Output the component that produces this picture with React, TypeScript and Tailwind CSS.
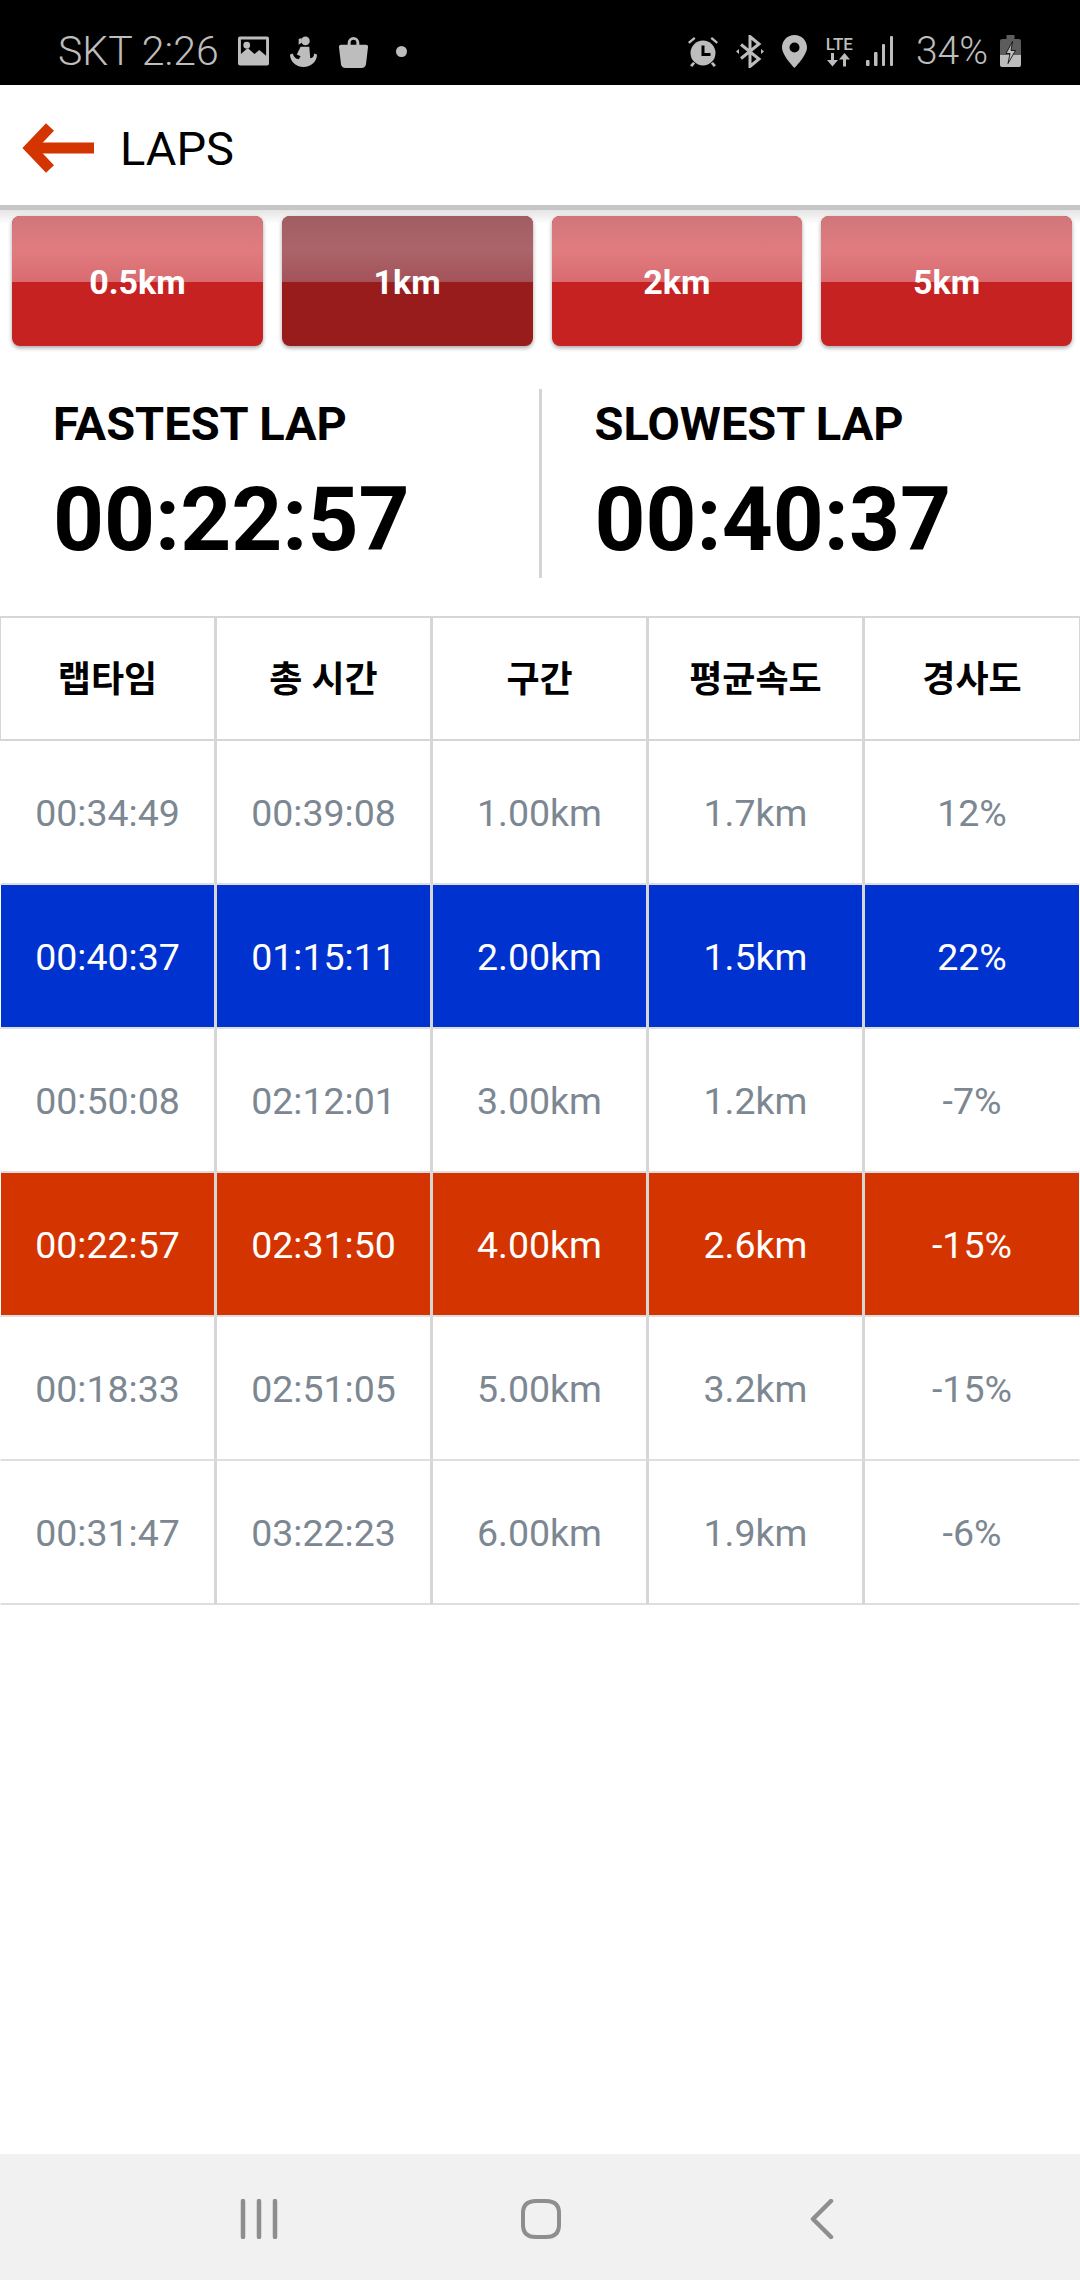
import React from 'react';

const headers = ['랩타임', '총 시간', '구간', '평균속도', '경사도'];

const rows = [
  { cells: ['00:34:49', '00:39:08', '1.00km', '1.7km', '12%'], tone: 'plain' },
  { cells: ['00:40:37', '01:15:11', '2.00km', '1.5km', '22%'], tone: 'slow' },
  { cells: ['00:50:08', '02:12:01', '3.00km', '1.2km', '-7%'], tone: 'plain' },
  { cells: ['00:22:57', '02:31:50', '4.00km', '2.6km', '-15%'], tone: 'fast' },
  { cells: ['00:18:33', '02:51:05', '5.00km', '3.2km', '-15%'], tone: 'plain' },
  { cells: ['00:31:47', '03:22:23', '6.00km', '1.9km', '-6%'], tone: 'plain' },
];

const distances = ['0.5km', '1km', '2km', '5km'];

function StatusIcons() {
  return (
    <div className="flex items-center text-[#bdbdbd]">
      {/* alarm */}
      <svg width="32" height="33" viewBox="0 0 32 33" fill="currentColor">
        <circle cx="16" cy="18" r="12.5" />
        <path d="M14.500 10.500h3v7.500h6v3h-9z" fill="#000" />
        <path d="M1 7l6-5 1.500 1.800-6 5zM31 7l-6-5-1.500 1.800 6 5zM6 27l2.200 1.600-3 3.400-2.200-1.700zM26 27l-2.200 1.600 3 3.400 2.200-1.700z" />
      </svg>
      {/* bluetooth */}
      <svg width="28" height="33" viewBox="0 0 28 33" fill="none" stroke="currentColor" strokeWidth="3" className="ml-[17px]">
        <path d="M5 9.500l18 14.500-9 7.500V1.500l9 7.500-18 14.500" />
        <path d="M0 16.500l3-2.500v5zM28 16.500l-3-2.500v5z" fill="currentColor" stroke="none" />
      </svg>
      {/* location */}
      <svg width="25" height="33" viewBox="0 0 25 33" fill="currentColor" className="ml-[18px]">
        <path fillRule="evenodd" d="M12.500 0C5.600 0 0 5.400 0 12.500 0 20.500 12.500 33 12.500 33S25 20.500 25 12.500C25 5.400 19.400 0 12.500 0zm0 7.500a5 5 0 1 1 0 10 5 5 0 0 1 0-10z" />
      </svg>
      <div className="ml-[17px] flex w-[31px] flex-col items-center">
        <span className="font-['Roboto',sans-serif] text-[17px] leading-[16px] font-medium">LTE</span>
        <svg width="24" height="15" viewBox="0 0 24 15" fill="currentColor">
          <path d="M5.500 14.500L0 8h4V1h3v7h4zM17.500 1L23 7.500h-4v7h-3v-7h-4z" />
        </svg>
      </div>
      <svg width="27" height="30" viewBox="0 0 27 30" fill="currentColor" className="ml-[11px]">
        <rect x="0" y="24" width="3.500" height="6" rx="1" />
        <rect x="8" y="16" width="3.500" height="14" rx="1" />
        <rect x="16" y="8" width="3" height="22" rx="1" />
        <rect x="24" y="0" width="3" height="30" rx="1" />
      </svg>
      <span className="ml-[23px] font-['Roboto',sans-serif] text-[39px] leading-none font-light">34%</span>
      <svg width="21" height="32" viewBox="0 0 21 32" className="ml-[12px]">
        <path d="M6.500 0h8v4H19a2 2 0 0 1 2 2v14H0V6a2 2 0 0 1 2-2h4.500z" fill="#5c5c5c" />
        <path d="M0 20h21v10a2 2 0 0 1-2 2H2a2 2 0 0 1-2-2z" fill="currentColor" />
        <path d="M12.500 6.500L6 18.500h4l-2 10 7.500-13H11l1.500-9z" fill="#bdbdbd" stroke="#000" strokeWidth="0.800" />
      </svg>
    </div>
  );
}

function StatusBar() {
  return (
    <div className="flex h-[85px] items-center justify-between bg-black pt-[17px] pr-[59px] pl-[58px] text-[#bdbdbd]">
      <div className="flex items-center">
        <span className="font-['Roboto',sans-serif] text-[41px] leading-none font-light">SKT 2:26</span>
        <svg width="31" height="30" viewBox="0 0 32 30" className="ml-[19px]" fill="currentColor">
          <path fillRule="evenodd" d="M2 0h28a2 2 0 0 1 2 2v26a2 2 0 0 1-2 2H2a2 2 0 0 1-2-2V2a2 2 0 0 1 2-2zm1 3v15l7-6 7 6 5-4 7 6V3zM9 5.500a3.500 3.500 0 1 1 0 7 3.500 3.500 0 0 1 0-7z" />
        </svg>
        <svg width="27" height="31" viewBox="0 0 28 32" className="ml-[21px]" fill="currentColor">
          <circle cx="16" cy="5" r="4.500" />
          <path d="M9 3l3-1v5l-3 2zM11 11h9l1 12c3-.500 4-2.500 4-5l3 1c0 7-6 13-14 13S0 26 0 19l3-1c.500 3 2 5 6 6l2-3-4-2z" />
        </svg>
        <svg width="31" height="33" viewBox="0 0 30 34" className="ml-[21px]" fill="currentColor">
          <path fillRule="evenodd" d="M9 10V8a6 6 0 0 1 12 0v2h7c1 0 2 1 2 2l-2 17c0 3-2 5-5 5H7c-3 0-5-2-5-5L0 12c0-1 1-2 2-2zm3 0h6V8a3 3 0 0 0-6 0z" />
        </svg>
        <span className="ml-[27px] h-[11px] w-[11px] rounded-full bg-[#bdbdbd]" />
      </div>
      <StatusIcons />
    </div>
  );
}

function AppBar() {
  return (
    <div className="flex h-[125px] items-center border-b-[5px] border-[#c6c6c6] bg-white pt-[6px] pl-[22px]">
      <svg width="72" height="52" viewBox="0 0 72 52" fill="none" stroke="#d43500" strokeWidth="11">
        <path d="M72 26H8" />
        <path d="M28 5L8 26l20 21" />
      </svg>
      <span className="ml-[26px] font-['Roboto',sans-serif] text-[47px] leading-none text-black">LAPS</span>
    </div>
  );
}

function DistanceButton({ label, active }: { label: string; active: boolean }) {
  return (
    <button
      className={`relative h-[130px] flex-1 overflow-hidden rounded-[8px] pt-[2px] font-['Roboto',sans-serif] text-[34px] font-bold text-white shadow-[0_2px_4px_rgba(0,0,0,0.35)] ${
        active ? 'bg-[#981c1c]' : 'bg-[#c62222]'
      }`}
    >
      <span
        className={`absolute inset-x-0 top-0 h-[66px] bg-gradient-to-b ${
          active ? 'from-[#a15d62] via-[#ab656a] to-[#a45259]' : 'from-[#d0767b] via-[#e07c80] to-[#d96b70]'
        }`}
      />
      <span className="relative">{label}</span>
    </button>
  );
}

function LapStat({ title, time }: { title: string; time: string }) {
  return (
    <div className="flex-1 pl-[53px]">
      <div className="mt-[8px] font-['Roboto',sans-serif] text-[47px] leading-[54px] font-bold text-black">{title}</div>
      <div className="mt-[17px] font-['Roboto',sans-serif] text-[89px] leading-[104px] font-bold text-black">{time}</div>
    </div>
  );
}

function LapTable() {
  return (
    <div className="mt-[38px] grid grid-cols-5 border-t-2 border-[#d6d6d6]">
      {headers.map((h, i) => (
        <div
          key={h}
          className={`flex h-[123px] items-center justify-center border-b-2 border-l border-[#d6d6d6] pt-[3px] font-['Roboto','Noto_Sans_CJK_KR',sans-serif] text-[36px] font-bold text-black ${
            i === 4 ? 'border-r' : 'border-r-2'
          }`}
        >
          {h}
        </div>
      ))}
      {rows.map((row) =>
        row.cells.map((cell, i) => (
          <div
            key={row.cells[0] + i}
            className={`flex h-[144px] items-center justify-center border-b-2 border-l border-b-[#dedede] border-l-[#d6d6d6] pt-[3px] font-['Roboto',sans-serif] text-[37.5px] ${
              i === 0 ? 'border-l-white' : ''
            } ${i === 4 ? 'border-r border-r-white' : 'border-r-2 border-r-[#d6d6d6]'} ${
              row.tone === 'slow'
                ? 'bg-[#0032d0] text-white'
                : row.tone === 'fast'
                  ? 'bg-[#d43500] text-white'
                  : 'bg-white text-[#7d8792]'
            }`}
          >
            {cell}
          </div>
        )),
      )}
    </div>
  );
}

function NavBar() {
  return (
    <div className="flex h-[126px] items-center bg-[#f1f1f1] pt-[4px] pl-[240px] text-[#8e8e8e]">
      <svg width="38" height="40" viewBox="0 0 38 40" fill="none" stroke="currentColor" strokeWidth="4.500" strokeLinecap="round">
        <path d="M3 2v36M19 2v36M35 2v36" />
      </svg>
      <svg width="40" height="40" viewBox="0 0 40 40" fill="none" stroke="currentColor" strokeWidth="4" className="ml-[243px]">
        <path d="M15 2h10c9 0 13 4 13 12v12c0 8-4 12-13 12H15C6 38 2 34 2 26V14C2 6 6 2 15 2z" />
      </svg>
      <svg width="24" height="40" viewBox="0 0 24 40" fill="none" stroke="currentColor" strokeWidth="4.500" strokeLinecap="round" strokeLinejoin="round" className="ml-[249px]">
        <path d="M21 2L3 20l18 18" />
      </svg>
    </div>
  );
}

export default function App() {
  return (
    <div className="flex h-[2280px] w-[1080px] flex-col bg-white">
      <StatusBar />
      <AppBar />
      <div className="flex gap-[19px] bg-[linear-gradient(#e4e4e4,#ffffff_14px)] pt-[6px] pr-[8px] pl-[12px]">
        {distances.map((d) => (
          <DistanceButton key={d} label={d} active={d === '1km'} />
        ))}
      </div>
      <div className="mt-[43px] flex h-[189px]">
        <LapStat title="FASTEST LAP" time="00:22:57" />
        <div className="w-[3px] bg-[#d4d4d4]" />
        <LapStat title="SLOWEST LAP" time="00:40:37" />
      </div>
      <LapTable />
      <div className="flex-1" />
      <NavBar />
    </div>
  );
}
